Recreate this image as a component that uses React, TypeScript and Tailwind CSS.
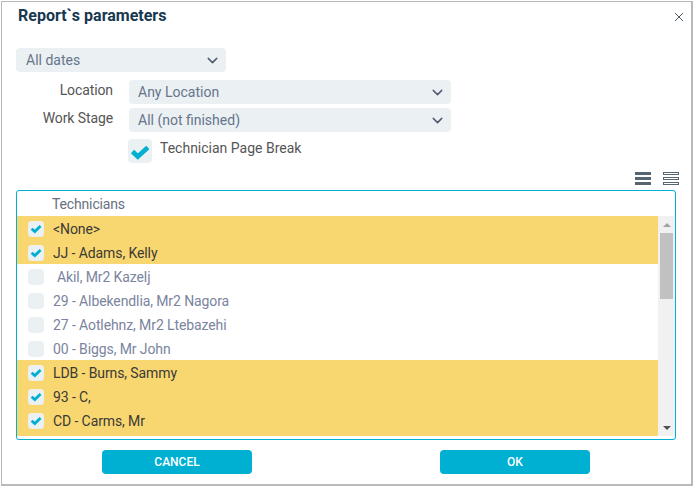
import { ChevronDown } from "lucide-react"

const technicians = [
  { name: "<None>", checked: true },
  { name: "JJ - Adams, Kelly", checked: true },
  { name: "Akil, Mr2 Kazelj", checked: false, indent: true },
  { name: "29 - Albekendlia, Mr2 Nagora", checked: false },
  { name: "27 - Aotlehnz, Mr2 Ltebazehi", checked: false },
  { name: "00 - Biggs, Mr John", checked: false },
  { name: "LDB - Burns, Sammy", checked: true },
  { name: "93 - C,", checked: true },
  { name: "CD - Carms, Mr", checked: true },
]

function Select({ label, className }: { label: string; className: string }) {
  return (
    <div className={`flex h-6 items-center justify-between rounded bg-[#ebf0f3] pr-[5px] text-[14px] text-[#66758c] ${className}`}>
      <span>{label}</span>
      <ChevronDown size={17} strokeWidth={2} className="text-[#4d5a70]" />
    </div>
  )
}

function TechnicianRow({ name, checked, indent }: { name: string; checked: boolean; indent?: boolean }) {
  return (
    <div className={`flex h-6 items-center pl-[11px] pt-0.5 text-[14px] tracking-[-0.1px] ${checked ? "bg-[#f9d770] text-[#3a3a36]" : "bg-white text-[#7a849e]"}`}>
      <div className="flex h-4 w-4 items-center justify-center rounded bg-[#ebf0f3]">
        {checked && (
          <svg width="16" height="16" viewBox="0 0 16 16" fill="none">
            <path d="M3.6 7.8 L6.8 10.6 L12.6 5" stroke="#00b0d3" strokeWidth="2.8" />
          </svg>
        )}
      </div>
      <span className={indent ? "ml-[13px]" : "ml-[9px]"}>{name}</span>
    </div>
  )
}

export default function App() {
  return (
    <div className="ml-px mt-px flex h-[485px] w-[692px] flex-col border border-b-2 border-r-2 border-[#b9b9b9] bg-white font-['Roboto',sans-serif]">
      <div className="flex h-[30px] items-center justify-between pb-0.5 pl-4 pr-[7px]">
        <h1 className="text-[16px] font-bold text-[#17384f]">Report`s parameters</h1>
        <svg width="10" height="10" viewBox="0 0 10 10" stroke="#4d5a6a" strokeWidth="1" className="mt-0.5">
          <path d="M1 1 L9 9 M9 1 L1 9" />
        </svg>
      </div>

      <div className="mt-4 pl-3.5">
        <Select label="All dates" className="w-[210px] pl-2.5" />
      </div>

      <div className="mt-2 flex flex-col gap-1 pl-3.5">
        <div className="flex items-start">
          <label className="w-[97px] text-right text-[14px] leading-5 tracking-[-0.1px] text-[#555]">Location</label>
          <div className="ml-4">
            <Select label="Any Location" className="w-[322px] pl-[9px]" />
          </div>
        </div>
        <div className="flex items-start">
          <label className="w-[97px] text-right text-[14px] leading-5 tracking-[-0.1px] text-[#555]">Work Stage</label>
          <div className="ml-4">
            <Select label="All (not finished)" className="w-[322px] pl-[9px]" />
          </div>
        </div>
      </div>

      <div className="mt-[7px] flex items-start pl-[126px]">
        <div className="h-6 w-6 rounded bg-[#ebf0f3]">
          <svg width="24" height="24" viewBox="0 0 24 24" fill="none">
            <path d="M4.5 12.5 L9.8 17.5 L19.8 8.5" stroke="#00b0d3" strokeWidth="4.6" />
          </svg>
        </div>
        <span className="ml-2 text-[14px] leading-[19px] text-[#555]">Technician Page Break</span>
      </div>

      <div className="mt-[9px] flex h-[13px] justify-end gap-[12px] pr-[12px]">
        <div className="flex w-4 flex-col justify-between">
          <div className="h-[3px] bg-[#56656f]" />
          <div className="h-[3px] bg-[#56656f]" />
          <div className="h-[3px] bg-[#56656f]" />
        </div>
        <div className="flex w-4 flex-col justify-between">
          <div className="h-[3px] border border-[#56656f]" />
          <div className="h-[3px] border border-[#56656f]" />
          <div className="h-[3px] border border-[#56656f]" />
        </div>
      </div>

      <div className="ml-3.5 mt-[5px] h-[250px] w-[660px] rounded-[3px] border border-[#00b0d3]">
        <div className="h-[25px] pl-[35px] text-[14px] leading-[26px] tracking-[-0.15px] text-[#66707f]">Technicians</div>
        <div className="flex h-[220px]">
          <div className="flex-1">
            {technicians.map((t) => (
              <TechnicianRow key={t.name} name={t.name} checked={t.checked} indent={t.indent} />
            ))}
            <div className="h-1 bg-[#f9d770]" />
          </div>
          <div className="flex w-[17px] flex-col items-center bg-[#f1f1f1]">
            <div className="flex h-[17px] items-center justify-center">
              <div className="h-0 w-0 border-x-[4px] border-b-[4px] border-x-transparent border-b-[#a3a3a3]" />
            </div>
            <div className="h-[66px] w-[13px] bg-[#c1c1c1]" />
            <div className="flex-1" />
            <div className="flex h-[17px] items-center justify-center">
              <div className="h-0 w-0 border-x-[4px] border-t-[4px] border-x-transparent border-t-[#505050]" />
            </div>
          </div>
        </div>
      </div>

      <div className="mt-[10px] flex pl-[100px]">
        <button className="h-6 w-[150px] rounded bg-[#00b0d3] text-[12px] font-medium text-white">CANCEL</button>
        <button className="ml-[188px] h-6 w-[150px] rounded bg-[#00b0d3] text-[12px] font-medium text-white">OK</button>
      </div>
    </div>
  )
}
